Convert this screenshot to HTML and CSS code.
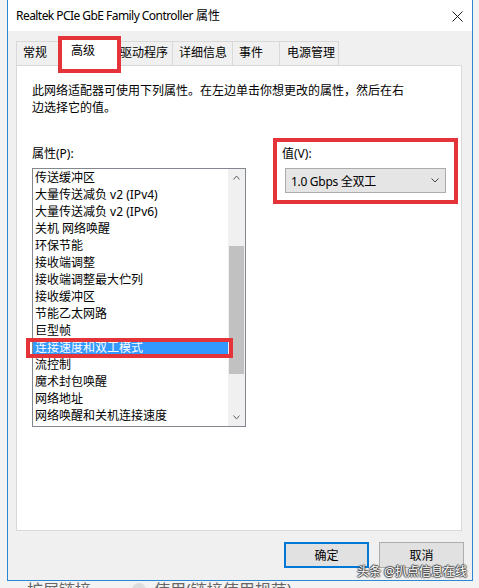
FILE: index.html
```html
<!DOCTYPE html>
<html lang="zh-CN">
<head>
    <meta charset="UTF-8">
    <title>Realtek PCIe GbE Family Controller 属性</title>
    <link rel="stylesheet" href="styles.css">
</head>
<body>
    <div class="screen">
        <div class="window">
            <div class="titlebar">
                <span class="title"><span class="title-latin">Realtek PCIe GbE Family Controller</span> 属性</span>
                <svg class="close" width="11" height="11" viewBox="0 0 11 11">
                    <path d="M0.5 0.5 L10.5 10.5 M10.5 0.5 L0.5 10.5" stroke="#1a1a1a" stroke-width="1" fill="none"/>
                </svg>
            </div>

            <div class="dialog">
                <div class="tabs">
                    <div class="tab tab-general">常规</div>
                    <div class="tab tab-advanced active">高级<span class="mark mark-tab"></span></div>
                    <div class="tab tab-driver">驱动程序</div>
                    <div class="tab tab-details">详细信息</div>
                    <div class="tab tab-events">事件</div>
                    <div class="tab tab-power">电源管理</div>
                </div>

                <div class="panel">
                    <p class="desc">此网络适配器可使用下列属性。在左边单击你想更改的属性，然后在右<br>边选择它的值。</p>

                    <div class="props">
                        <div class="prop-col">
                            <div class="label">属性(P):</div>
                            <div class="listbox">
                                <ul class="items">
                                    <li>传送缓冲区</li>
                                    <li>大量传送减负 v2 (IPv4)</li>
                                    <li>大量传送减负 v2 (IPv6)</li>
                                    <li>关机 网络唤醒</li>
                                    <li>环保节能</li>
                                    <li>接收端调整</li>
                                    <li>接收端调整最大伫列</li>
                                    <li>接收缓冲区</li>
                                    <li>节能乙太网路</li>
                                    <li>巨型帧</li>
                                    <li class="selected">连接速度和双工模式<span class="mark mark-item"></span></li>
                                    <li>流控制</li>
                                    <li>魔术封包唤醒</li>
                                    <li>网络地址</li>
                                    <li>网络唤醒和关机连接速度</li>
                                </ul>
                                <div class="scrollbar">
                                    <div class="arrow">
                                        <svg width="7" height="5" viewBox="0 0 7 5"><polyline points="0.5,4.5 3.5,1 6.5,4.5" stroke="#606060" fill="none"/></svg>
                                    </div>
                                    <div class="track">
                                        <div class="thumb"></div>
                                    </div>
                                    <div class="arrow">
                                        <svg width="7" height="5" viewBox="0 0 7 5"><polyline points="0.5,0.5 3.5,4 6.5,0.5" stroke="#606060" fill="none"/></svg>
                                    </div>
                                </div>
                            </div>
                        </div>

                        <div class="value-col">
                            <div class="label">值(V):</div>
                            <div class="select">
                                <span class="select-text">1.0 Gbps 全双工</span>
                                <svg width="8" height="5" viewBox="0 0 8 5"><polyline points="0.5,0.5 4,4 7.5,0.5" stroke="#444" fill="none"/></svg>
                            </div>
                            <span class="mark mark-value"></span>
                        </div>
                    </div>
                </div>

                <div class="buttons">
                    <button class="btn btn-default">确定</button>
                    <button class="btn">取消</button>
                </div>
            </div>
        </div>

        <div class="backdrop">
            <span class="backdrop-link">扩展链接</span>
            <span class="backdrop-dot"></span>
            <span class="backdrop-text">使用(链接使用规范)</span>
        </div>

        <div class="watermark">头条 @扒点信息在线</div>
    </div>
</body>
</html>
```

FILE: styles.css
```css
body {
    margin: 0;
    background-color: #f3f3f3;
    font-family: "Noto Sans", "Noto Sans CJK SC", sans-serif;
    font-size: 12px;
    color: #111;
}
.screen {
    position: relative;
    width: 479px;
    height: 588px;
    overflow: hidden;
}
.window {
    box-sizing: border-box;
    width: 466px;
    height: 581px;
    margin-left: 7px;
    border: 1px solid #2b86d3;
    border-top: 0;
    background-color: #f0f0f0;
    display: flex;
    flex-direction: column;
}

/* title bar */
.titlebar {
    height: 31px;
    background-color: #fff;
    display: flex;
    align-items: center;
    justify-content: space-between;
    padding: 0 9px 0 8px;
}
.title {
    font-size: 12px;
    line-height: 16px;
    color: #000;
}
.title-latin {
    letter-spacing: -0.55px;
}
.close {
    display: block;
    margin-top: 1px;
}

/* dialog body */
.dialog {
    flex: 1;
    display: flex;
    flex-direction: column;
    padding: 0 8px;
}
.tabs {
    display: flex;
    align-items: flex-end;
    height: 24px;
    margin-top: 10px;
}
.tab {
    position: relative;
    box-sizing: border-box;
    height: 24px;
    line-height: 22px;
    border: 1px solid #d9d9d9;
    border-bottom: 0;
    margin-right: -1px;
    background-color: #f0f0f0;
    color: #000;
    white-space: nowrap;
}
.tab.active {
    height: 28px;
    line-height: 24px;
    margin-bottom: -1px;
    background-color: #fff;
    z-index: 1;
}
.tab-general { width: 46px; padding-left: 6px; }
.tab-advanced { width: 57px; padding-left: 9px; }
.tab-driver { width: 56px; padding-left: 2px; }
.tab-details { width: 61px; padding-left: 6px; }
.tab-events { width: 48px; padding-left: 6px; }
.tab-power { width: 60px; padding-left: 7px; }

.panel {
    box-sizing: border-box;
    height: 466px;
    margin-right: 2px;
    background-color: #fff;
    border: 1px solid #d9d9d9;
    padding: 16px 15px 0 15px;
}
.desc {
    margin: 0;
    line-height: 17px;
    color: #000;
}
.props {
    display: flex;
    margin-top: 29px;
}
.label {
    line-height: 17px;
    margin-bottom: 6px;
    color: #000;
}
.prop-col {
    width: 216px;
}
.listbox {
    box-sizing: border-box;
    height: 259px;
    border: 1px solid #828790;
    display: flex;
}
.items {
    flex: 1;
    list-style: none;
    margin: 0;
    padding: 0;
}
.items li {
    position: relative;
    height: 17px;
    line-height: 17px;
    padding-left: 2px;
    color: #000;
    white-space: nowrap;
}
.items li.selected {
    background-color: #3399ff;
    color: #fff;
}
.scrollbar {
    width: 17px;
    background-color: #f0f0f0;
    display: flex;
    flex-direction: column;
}
.arrow {
    height: 17px;
    display: flex;
    align-items: center;
    justify-content: center;
}
.track {
    flex: 1;
    padding: 60px 1px 35px 1px;
}
.thumb {
    height: 100%;
    background-color: #c1c1c1;
}

.value-col {
    position: relative;
    margin-left: 36px;
}
.select {
    box-sizing: border-box;
    width: 161px;
    height: 25px;
    margin-left: 3px;
    border: 1px solid #acacac;
    background-color: #e5e5e5;
    display: flex;
    align-items: center;
    justify-content: space-between;
    padding: 0 6px 0 5px;
    color: #000;
}
.select-text {
    letter-spacing: -0.3px;
}
.select svg {
    display: block;
}

/* red annotation boxes */
.mark {
    position: absolute;
    border: 4px solid #e53439;
    pointer-events: none;
}
.mark-tab {
    left: -4px;
    top: -3px;
    width: 55px;
    height: 29px;
}
.mark-item {
    left: -7px;
    top: -1px;
    width: 199px;
    height: 12px;
}
.mark-value {
    left: -9px;
    top: -7px;
    width: 177px;
    height: 58px;
}

/* buttons */
.buttons {
    display: flex;
    justify-content: flex-end;
    gap: 10px;
    margin-top: 11px;
}
.btn {
    box-sizing: border-box;
    width: 85px;
    height: 26px;
    border: 1px solid #adadad;
    background-color: #e1e1e1;
    font-family: "Noto Sans", "Noto Sans CJK SC", sans-serif;
    font-size: 12px;
    color: #000;
    padding: 0;
}
.btn-default {
    border: 2px solid #0078d7;
}

/* page behind the dialog */
.backdrop {
    display: flex;
    align-items: center;
    height: 16px;
    font-size: 16px;
    line-height: 16px;
    color: #666;
    margin-top: 1px;
}
.backdrop-link {
    margin-left: 27px;
}
.backdrop-dot {
    width: 14px;
    height: 14px;
    border-radius: 50%;
    background-color: #dcdcdc;
    margin-left: 41px;
}
.backdrop-text {
    margin-left: 8px;
}

.watermark {
    position: absolute;
    left: 357px;
    top: 564px;
    font-size: 12px;
    line-height: 16px;
    color: #fff;
    text-shadow: 1px 0 1px #444, -1px 0 1px #444, 0 1px 1px #444, 0 -1px 1px #444;
}
```
